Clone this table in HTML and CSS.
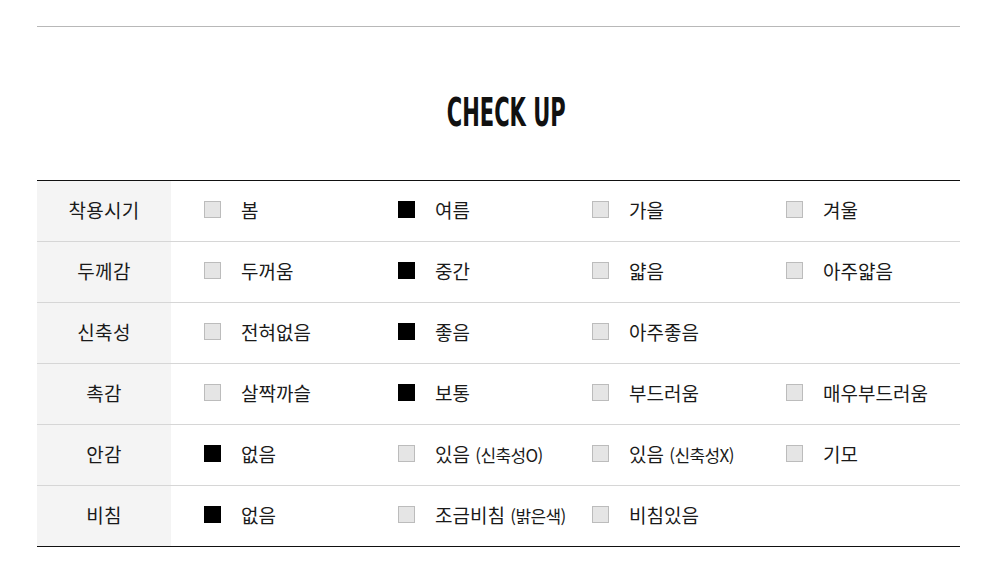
FILE: index.html
```html
<!DOCTYPE html>
<html lang="ko">
<head>
<meta charset="utf-8">
<link rel="stylesheet" href="styles.css">
</head>
<body>
<div class="wrap">
  <div class="topline"></div>
  <h2 class="title"><span class="title-text">CHECK UP</span></h2>
  <div class="table">
    <div class="row">
      <div class="label">착용시기</div>
      <div class="opts">
        <div class="opt"><span class="box"></span><span class="txt">봄</span></div>
        <div class="opt"><span class="box on"></span><span class="txt">여름</span></div>
        <div class="opt"><span class="box"></span><span class="txt">가을</span></div>
        <div class="opt"><span class="box"></span><span class="txt">겨울</span></div>
      </div>
    </div>
    <div class="row">
      <div class="label">두께감</div>
      <div class="opts">
        <div class="opt"><span class="box"></span><span class="txt">두꺼움</span></div>
        <div class="opt"><span class="box on"></span><span class="txt">중간</span></div>
        <div class="opt"><span class="box"></span><span class="txt">얇음</span></div>
        <div class="opt"><span class="box"></span><span class="txt">아주얇음</span></div>
      </div>
    </div>
    <div class="row">
      <div class="label">신축성</div>
      <div class="opts">
        <div class="opt"><span class="box"></span><span class="txt">전혀없음</span></div>
        <div class="opt"><span class="box on"></span><span class="txt">좋음</span></div>
        <div class="opt"><span class="box"></span><span class="txt">아주좋음</span></div>
      </div>
    </div>
    <div class="row">
      <div class="label">촉감</div>
      <div class="opts">
        <div class="opt"><span class="box"></span><span class="txt">살짝까슬</span></div>
        <div class="opt"><span class="box on"></span><span class="txt">보통</span></div>
        <div class="opt"><span class="box"></span><span class="txt">부드러움</span></div>
        <div class="opt"><span class="box"></span><span class="txt">매우부드러움</span></div>
      </div>
    </div>
    <div class="row">
      <div class="label">안감</div>
      <div class="opts">
        <div class="opt"><span class="box on"></span><span class="txt">없음</span></div>
        <div class="opt"><span class="box"></span><span class="txt">있음 <small>(신축성O)</small></span></div>
        <div class="opt"><span class="box"></span><span class="txt">있음 <small>(신축성X)</small></span></div>
        <div class="opt"><span class="box"></span><span class="txt">기모</span></div>
      </div>
    </div>
    <div class="row last">
      <div class="label">비침</div>
      <div class="opts">
        <div class="opt"><span class="box on"></span><span class="txt">없음</span></div>
        <div class="opt"><span class="box"></span><span class="txt">조금비침 <small>(밝은색)</small></span></div>
        <div class="opt"><span class="box"></span><span class="txt">비침있음</span></div>
      </div>
    </div>
  </div>
</div>
</body>
</html>
```

FILE: styles.css
```css
html, body {
  margin: 0;
  padding: 0;
  background: #fff;
}
body {
  font-family: "Noto Sans CJK KR", "Noto Sans", sans-serif;
  color: #1a1a1a;
}
.wrap {
  width: 923px;
  margin-left: 37px;
  padding-top: 26px;
}
.topline {
  border-top: 1px solid #b8b8b8;
}
.title {
  margin: 0;
  padding-top: 66px;
  height: 87px;
  box-sizing: border-box;
  text-align: center;
  font-family: "Liberation Sans Narrow", "DejaVu Sans Condensed", sans-serif;
  font-weight: bold;
  font-size: 39px;
  line-height: 40px;
  color: #111;
}
.title-text {
  display: inline-block;
  transform: scaleX(0.6);
  margin-left: 16px;
}
.table {
  margin-top: 66px;
  border-top: 1px solid #111;
}
.row {
  display: flex;
  height: 60px;
  border-bottom: 1px solid #d6d6d6;
}
.row.last {
  border-bottom: 1px solid #111;
}
.label {
  flex: none;
  width: 134px;
  padding-bottom: 4px;
  box-sizing: border-box;
  background: #f4f4f4;
  display: flex;
  align-items: center;
  justify-content: center;
  font-size: 19px;
  letter-spacing: 0.3px;
}
.opts {
  flex: 1;
  min-width: 0;
  display: grid;
  grid-template-columns: repeat(4, 194px);
  padding-left: 33px;
}
.opt {
  display: flex;
  align-items: center;
  gap: 20px;
  padding-bottom: 4px;
}
.box {
  width: 15px;
  height: 15px;
  background: #e5e5e5;
  border: 1px solid #bcbcbc;
  flex: none;
}
.box.on {
  background: #000;
  border-color: #000;
}
.txt {
  font-size: 19px;
  white-space: nowrap;
}
.txt small {
  font-size: 17px;
  letter-spacing: -0.6px;
}
```
